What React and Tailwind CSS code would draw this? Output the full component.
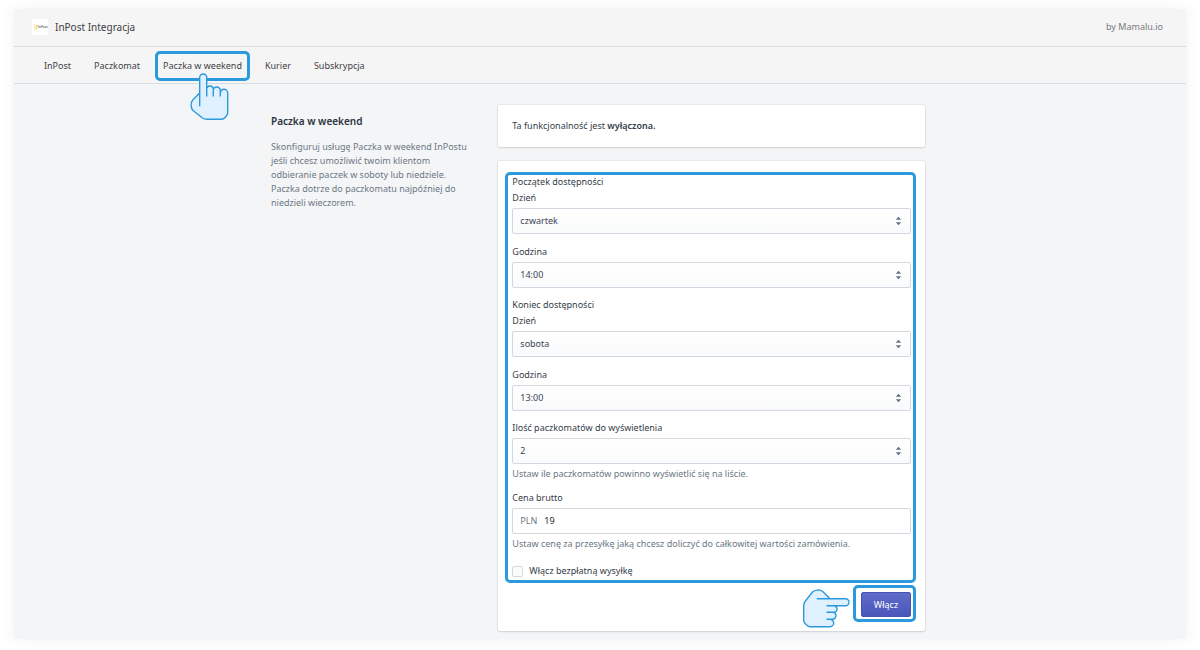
import { useState } from "react";

const navItems = ["InPost", "Paczkomat", "Paczka w weekend", "Kurier", "Subskrypcja"];

const days = ["poniedziałek", "wtorek", "środa", "czwartek", "piątek", "sobota", "niedziela"];
const hours = ["12:00", "13:00", "14:00", "15:00", "16:00"];
const counts = ["1", "2", "3", "4", "5"];

const HAND_PATH =
  "M9.7 32.7V4.5a3.5 3.5 0 0 1 7 0V23V16.3a3.3 3.3 0 0 1 6.6 0V23V17.5a3.5 3.5 0 0 1 7 0V23V20a3.7 3.7 0 0 1 7.4 0V40.3C37.7 42 34 46.3 31.7 46.3H17C15 46.3 14 46 12.5 45L3 37.5C0.8 35.5 0.2 30 2.7 27L9.7 20";

function HandUp({ className }) {
  return (
    <svg className={className} width="40" height="48" viewBox="0 0 40 48" aria-hidden="true">
      <path d={HAND_PATH} fill="#dff0fe" stroke="#2a9adc" strokeWidth="1.4" strokeLinejoin="round" strokeLinecap="round" />
    </svg>
  );
}

function HandRight({ className }) {
  return (
    <svg className={className} width="48" height="40" viewBox="0 0 48 40" aria-hidden="true">
      <g transform="translate(48 0) rotate(90)">
        <path d={HAND_PATH} fill="#dff0fe" stroke="#2a9adc" strokeWidth="1.4" strokeLinejoin="round" strokeLinecap="round" />
      </g>
    </svg>
  );
}

function Logo() {
  return (
    <svg className="h-4 w-4 bg-white" viewBox="0 0 16 16" aria-hidden="true">
      <path d="M2.2 5 3.4 6.6M1.6 8h1.6M2.2 11 3.4 9.4" stroke="#f7dc80" strokeWidth="0.9" />
      <path d="M5.2 5.8a2.6 2.6 0 0 0 0 4.4" stroke="#f7d86c" strokeWidth="1.4" fill="none" />
      <text x="5.8" y="9.2" fontSize="3" fontWeight="700" fill="#777">InPost</text>
    </svg>
  );
}

function SelectField({ id, label, options, value, onChange, help }) {
  return (
    <div>
      <label htmlFor={id} className="block mb-[3px]">{label}</label>
      <div className="relative">
        <select
          id={id}
          value={value}
          onChange={(e) => onChange(e.target.value)}
          className="block w-full h-[26px] appearance-none rounded-[2px] border border-[#d3d8e0] bg-linear-to-b from-white to-[#f9fafb] px-[7px] text-[#3b4654] focus:outline-none focus:ring-1 focus:ring-indigo-500"
        >
          {options.map((o) => (
            <option key={o}>{o}</option>
          ))}
        </select>
        <svg className="pointer-events-none absolute right-[9px] top-2 text-[#637381]" width="7" height="10" viewBox="0 0 7 10" aria-hidden="true">
          <path d="M3.5 0.8 6.2 3.8H0.8zM3.5 9.2 0.8 6.2h5.4z" fill="currentColor" />
        </svg>
      </div>
      {help && <p className="mt-[3px] text-[#6b7884]">{help}</p>}
    </div>
  );
}

export default function App() {
  const [startDay, setStartDay] = useState("czwartek");
  const [startHour, setStartHour] = useState("14:00");
  const [endDay, setEndDay] = useState("sobota");
  const [endHour, setEndHour] = useState("13:00");
  const [count, setCount] = useState("2");
  const [price, setPrice] = useState("19");
  const [free, setFree] = useState(false);

  return (
    <div className="px-[14px] pt-[9px] pb-[11px] bg-white font-['Noto_Sans',sans-serif] text-[9px] leading-[14px] text-[#333d49]">
      <div className="bg-[#f4f5f7] shadow-[0_0_12px_rgba(60,80,70,0.08)]">

        <header className="flex items-center justify-between h-[38px] pl-[18px] pr-[23px] pb-0.5 bg-[#f5f5f5] border-b border-[#d9dbdd]">
          <div className="flex items-center gap-[7px]">
            <Logo />
            <h1 className="text-[10px] text-[#3f4042]">InPost Integracja</h1>
          </div>
          <span className="text-[#797b7e]">by Mamalu.io</span>
        </header>

        <nav className="flex items-center gap-px h-[37px] px-[19px] pt-0.5 bg-[#f5f5f5] border-b border-[#d8dde2]">
          {navItems.map((item) => (
            <a key={item} href="#" className="relative px-[11px] text-[#3f4245] whitespace-nowrap">
              {item}
              {item === "Paczka w weekend" && (
                <>
                  <span className="absolute inset-x-[3px] -inset-y-2 rounded-[5px] border-[3px] border-[#2a9adc]" />
                  <HandUp className="absolute left-[38px] top-[14px] z-10" />
                </>
              )}
            </a>
          ))}
        </nav>

        <main className="pt-[21px] pb-2 pr-1">
          <div className="max-w-[654px] mx-auto grid grid-cols-[1fr_2fr] gap-[14px]">

            {/* Description */}
            <section className="pt-[9px] pr-3">
              <h2 className="text-[10px] font-semibold text-[#2b3440]">Paczka w weekend</h2>
              <p className="mt-3 text-[#6b7884]">
                Skonfiguruj usługę Paczka w weekend InPostu jeśli chcesz umożliwić twoim klientom odbieranie paczek w soboty lub niedziele. Paczka dotrze do paczkomatu najpóźniej do niedzieli wieczorem.
              </p>
            </section>

            <div className="flex flex-col gap-[14px]">
              {/* Status */}
              <div className="rounded-[2px] bg-white p-[14px] shadow-[0_0_0_1px_rgba(63,63,68,0.05),0_1px_2px_rgba(63,63,68,0.15)]">
                <p>
                  Ta funkcjonalność jest <strong className="font-semibold">wyłączona.</strong>
                </p>
              </div>

              {/* Settings */}
              <form
                onSubmit={(e) => e.preventDefault()}
                className="rounded-[2px] bg-white p-[14px] shadow-[0_0_0_1px_rgba(63,63,68,0.05),0_1px_2px_rgba(63,63,68,0.15)]"
              >
                <div className="relative flex flex-col gap-[10px]">
                  <div>
                    <p className="mb-0.5">Początek dostępności</p>
                    <div className="flex flex-col gap-[11px]">
                      <SelectField id="start-day" label="Dzień" options={days} value={startDay} onChange={setStartDay} />
                      <SelectField id="start-hour" label="Godzina" options={hours} value={startHour} onChange={setStartHour} />
                    </div>
                  </div>

                  <div>
                    <p className="mb-0.5">Koniec dostępności</p>
                    <div className="flex flex-col gap-[11px]">
                      <SelectField id="end-day" label="Dzień" options={days} value={endDay} onChange={setEndDay} />
                      <SelectField id="end-hour" label="Godzina" options={hours} value={endHour} onChange={setEndHour} />
                    </div>
                  </div>

                  <SelectField
                    id="count"
                    label="Ilość paczkomatów do wyświetlenia"
                    options={counts}
                    value={count}
                    onChange={setCount}
                    help="Ustaw ile paczkomatów powinno wyświetlić się na liście."
                  />

                  <div>
                    <label htmlFor="price" className="block mb-[3px]">Cena brutto</label>
                    <div className="flex items-center h-[26px] rounded-[2px] border border-[#d3d8e0] bg-white px-[7px]">
                      <span className="text-[#6b7884]">PLN</span>
                      <input
                        id="price"
                        type="text"
                        value={price}
                        onChange={(e) => setPrice(e.target.value)}
                        className="ml-[7px] min-w-0 flex-1 text-[#212b36] focus:outline-none"
                      />
                    </div>
                    <p className="mt-[3px] text-[#6b7884]">
                      Ustaw cenę za przesyłkę jaką chcesz doliczyć do całkowitej wartości zamówienia.
                    </p>
                  </div>

                  <label className="mt-[3px] flex items-center gap-[6px]">
                    <input
                      type="checkbox"
                      checked={free}
                      onChange={(e) => setFree(e.target.checked)}
                      className="h-[11px] w-[11px] appearance-none rounded-[2px] border border-[#d3d8e0] bg-[#fbfcfc] checked:bg-indigo-500"
                    />
                    Włącz bezpłatną wysyłkę
                  </label>

                  <span className="pointer-events-none absolute -top-[3px] -bottom-[5px] -left-[7px] -right-[5px] rounded-[5px] border-[3px] border-[#2a9adc]" />
                </div>

                <div className="mt-[14px] flex justify-end">
                  <div className="relative">
                    <button
                      type="submit"
                      className="block h-[25px] w-[50px] rounded-[2px] border border-[#4553b4] bg-linear-to-b from-[#5f6bc6] to-[#4a57bb] text-white"
                    >
                      Włącz
                    </button>
                    <span className="pointer-events-none absolute -top-[7px] -bottom-[5px] -left-2 -right-[5px] rounded-[5px] border-[3px] border-[#2a9adc]" />
                    <HandRight className="absolute right-[61px] -top-[3px]" />
                  </div>
                </div>
              </form>
            </div>

          </div>
        </main>
      </div>
    </div>
  );
}
